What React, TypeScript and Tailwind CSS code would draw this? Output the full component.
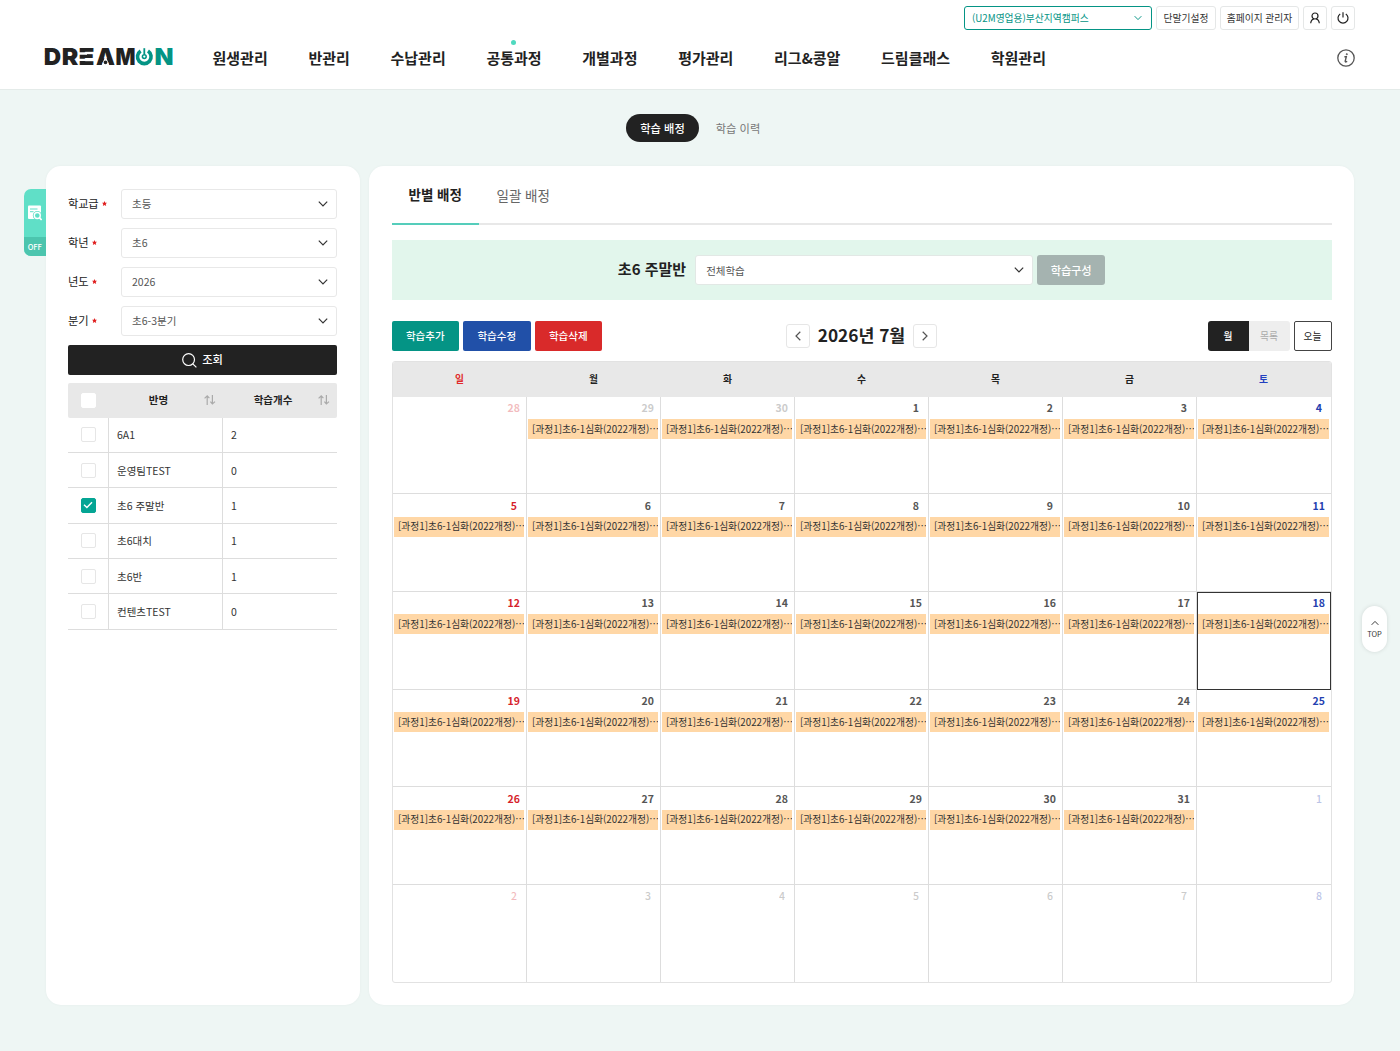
import { useState } from 'react';
import clsx from 'clsx';

const menus = ['원생관리', '반관리', '수납관리', '공통과정', '개별과정', '평가관리', '리그&콩알', '드림클래스', '학원관리'];

const filters = [
    { label: '학교급', value: '초등' },
    { label: '학년', value: '초6' },
    { label: '년도', value: '2026' },
    { label: '분기', value: '초6-3분기' },
];

const classes = [
    { name: '6A1', count: 2 },
    { name: '운영팀TEST', count: 0 },
    { name: '초6 주말반', count: 1 },
    { name: '초6대치', count: 1 },
    { name: '초6반', count: 1 },
    { name: '컨텐츠TEST', count: 0 },
];

const weekdays = ['일', '월', '화', '수', '목', '금', '토'];
const EVENT_TITLE = '[과정1]초6-1심화(2022개정)…';

// 6 weeks starting from Sunday, June 28
const days = Array.from({ length: 42 }, (_, i) => {
    const date = new Date(2026, 5, 28 + i);
    return {
        day: date.getDate(),
        week: i % 7,
        outside: date.getMonth() !== 6,
        hasEvent: i >= 1 && i <= 33,
        today: date.getMonth() === 6 && date.getDate() === 18,
    };
});

function Chevron({ className }: { className?: string }) {
    return (
        <svg viewBox="0 0 10 6" className={clsx('h-[6px] shrink-0', className)} fill="none" stroke="currentColor" strokeWidth="1.2">
            <path d="M0.8 0.7 5 5 9.2 0.7" />
        </svg>
    );
}

function Logo() {
    return (
        <svg viewBox="0 0 128 18" className="w-[128px] h-[18px] overflow-visible relative -top-px font-black font-['Inter','Noto_Sans_CJK_KR',sans-serif]">
            <g fill="#222" fontSize="23.6">
                <text x="-1.3" y="17.2" textLength="17.4" lengthAdjust="spacingAndGlyphs">D</text>
                <text x="16.7" y="17.2" textLength="16.6" lengthAdjust="spacingAndGlyphs">R</text>
                <text x="33.6" y="17.2" textLength="16" lengthAdjust="spacingAndGlyphs">E</text>
                <text x="51" y="17.2" textLength="19" lengthAdjust="spacingAndGlyphs">A</text>
                <text x="70.6" y="17.2" textLength="20" lengthAdjust="spacingAndGlyphs">M</text>
            </g>
            {/* cuts the stem of the E and opens the A */}
            <path d="M34 4.3H42V6.7H34ZM34 10.7H42V13.1H34ZM60.5 7.5 64.3 17.4H56.7Z" fill="#fff" />
            <circle cx="60.5" cy="14.4" r="1.8" fill="#222" />
            <text x="109.4" y="17.2" fontSize="23.6" fill="#049485" textLength="19" lengthAdjust="spacingAndGlyphs">N</text>
            <g fill="none" stroke="#049485">
                <path d="M95.6 3.1A6.8 6.8 0 1 0 103 3.1" strokeWidth="3.6" />
                <path d="M99.3 0.2V6.4" strokeWidth="1.8" />
                <circle cx="99.3" cy="8.6" r="1.9" strokeWidth="1.5" />
            </g>
        </svg>
    );
}

function Header() {
    return (
        <header className="h-[90px] bg-white border-b border-[#e4ebe9] px-[45px] pt-[6px]">
            <div className="flex justify-end gap-1 h-6 text-[9.75px] text-[#333]">
                <button className="flex items-center justify-between w-[188px] pl-[7px] pr-[9px] rounded-[3px] border border-[#049485] text-[#049485]">
                    (U2M영업용)부산지역캠퍼스
                    <Chevron className="w-[8px]" />
                </button>
                <button className="w-[60px] border border-[#e5e7e7] rounded-[3px]">단말기설정</button>
                <button className="w-[79px] border border-[#e5e7e7] rounded-[3px] whitespace-nowrap">홈페이지 관리자</button>
                <button className="w-6 flex items-center justify-center border border-[#e5e7e7] rounded-[3px]">
                    <svg viewBox="0 0 12 12" className="w-3 h-3" fill="none" stroke="#222" strokeWidth="1.2">
                        <circle cx="6" cy="4" r="3" />
                        <path d="M1.7 11.3C1.9 8.5 3.2 7.2 5 6.8M7 6.8C8.8 7.2 10.1 8.5 10.3 11.3" />
                    </svg>
                </button>
                <button className="w-6 flex items-center justify-center border border-[#e5e7e7] rounded-[3px]">
                    <svg viewBox="0 0 12 12" className="w-3 h-3" fill="none" stroke="#222" strokeWidth="1.2">
                        <path d="M3.2 1.9A5 5 0 1 0 8.8 1.9M6 0.3V5.4" />
                    </svg>
                </button>
            </div>
            <div className="flex items-center h-14">
                <Logo />
                <nav className="flex gap-[40.7px] ml-[39.5px] text-[15px] font-bold text-[#222]">
                    {menus.map((menu) => (
                        <a key={menu} className="relative whitespace-nowrap">
                            {menu}
                            {menu === '공통과정' && (
                                <span className="absolute -top-[7px] left-1/2 -ml-[3px] w-[5px] h-[5px] rounded-full bg-[#4fd9bf]" />
                            )}
                        </a>
                    ))}
                </nav>
                <svg viewBox="0 0 18 18" className="w-[18px] h-[18px] ml-auto" fill="none" stroke="#555" strokeWidth="1.3">
                    <circle cx="9" cy="9" r="8.2" />
                    <path d="M7.4 7.7H9.3L8.2 12.2Q8.1 13.1 9 12.9L10.2 12.3" strokeWidth="1.4" />
                    <circle cx="9.8" cy="5.2" r="0.6" fill="#555" strokeWidth="0.8" />
                </svg>
            </div>
        </header>
    );
}

function Checkbox({ checked, plain }: { checked?: boolean; plain?: boolean }) {
    return (
        <span
            className={clsx(
                'w-[15px] h-[15px] rounded-[2px] border flex items-center justify-center',
                checked ? 'bg-[#04a594] border-[#04a594]' : 'bg-white',
                !checked && (plain ? 'border-white' : 'border-[#e6e6e6]')
            )}
        >
            {checked && (
                <svg viewBox="0 0 10 8" className="w-[10px] h-2 shrink-0" fill="none" stroke="#fff" strokeWidth="1.4">
                    <path d="M1 3.8 3.9 6.6 9 1.2" />
                </svg>
            )}
        </span>
    );
}

function SortIcon() {
    return (
        <svg viewBox="0 0 12 10" className="w-3 h-[10px]" fill="none" stroke="#aaa" strokeWidth="1.2">
            <path d="M3.2 10V1M0.6 3.4 3.2 0.9 5.4 3.2M8.4 0V9M6.4 6.6 8.4 9 11 6.6" />
        </svg>
    );
}

function FilterPanel() {
    const [selected] = useState('초6 주말반');

    return (
        <aside className="relative w-[314px] h-[839px] bg-white rounded-[15px] px-[22px] pt-[22.5px] shadow-[0_0_3px_rgba(0,0,0,0.04)]">
            {/* Filter toggle */}
            <div className="absolute -left-[22px] top-[22.5px] w-[21.5px] h-[67.5px] rounded-l-[7px] overflow-hidden bg-[#60dfc7] flex flex-col">
                <div className="h-12 flex items-center justify-center">
                    <svg viewBox="0 0 14 16" className="w-[14px] h-4">
                        <path d="M1 0.5H12Q13 0.5 13 1.5V14H1Q0 14 0 13V1.5Q0 0.5 1 0.5Z" fill="#fff" />
                        <path d="M2 4H9.5M2 6.7H5.5" stroke="#60dfc7" strokeWidth="1" />
                        <circle cx="9.3" cy="10.5" r="3" fill="#60dfc7" stroke="#60dfc7" strokeWidth="3" />
                        <circle cx="9.3" cy="10.5" r="3" fill="none" stroke="#fff" strokeWidth="1.4" />
                        <path d="M11.4 12.6 13.6 15" stroke="#fff" strokeWidth="1.6" />
                    </svg>
                </div>
                <div className="flex-1 bg-[#4cc5ae] text-white text-[7.5px] font-medium flex items-center justify-center">OFF</div>
            </div>

            <div className="flex flex-col gap-[9px]">
                {filters.map((f) => (
                    <div key={f.label} className="flex items-center h-[30px]">
                        <label className="w-[53px] flex items-center gap-[4px] text-[11.25px] text-[#222] tracking-[-0.2px]">
                            {f.label}
                            <svg viewBox="0 0 6 6" className="w-[5px] h-[5px]" fill="#e02020">
                                <path d="M3 0 3.9 2 6 2.2 4.5 3.7 5 6 3 4.8 1 6 1.5 3.7 0 2.2 2.1 2Z" />
                            </svg>
                        </label>
                        <button className="w-[216px] h-full flex items-center justify-between border border-[#e8e8e8] rounded-[3px] pl-[10px] pr-[8.5px] text-[10.5px] text-[#555]">
                            <span className="pt-px">{f.value}</span>
                            <Chevron className="w-[10px] text-[#333]" />
                        </button>
                    </div>
                ))}
            </div>

            <button className="mt-[9.5px] w-[269px] h-[30px] bg-[#222] rounded-[2px] text-white text-[11.25px] font-medium flex items-center justify-center gap-[5px]">
                <svg viewBox="0 0 15 15" className="w-[15px] h-[15px]" fill="none" stroke="#fff" strokeWidth="1.2">
                    <circle cx="6.6" cy="6.6" r="5.9" />
                    <path d="M10.8 10.8 14.4 14.4" />
                </svg>
                <span className="-mt-px">조회</span>
            </button>

            <div className="mt-[7.5px] w-[269px] text-[10.5px] text-[#333]">
                <div className="flex h-[35px] bg-[#e8e8e8] rounded-[2px] font-bold text-[#222]">
                    <div className="w-[41px] flex items-center justify-center"><Checkbox plain /></div>
                    <div className="w-[114px] flex items-center pr-[7px]">
                        <span className="flex-1 text-center pl-[4px]">반명</span>
                        <SortIcon />
                    </div>
                    <div className="flex-1 flex items-center pr-[7px]">
                        <span className="flex-1 text-center pl-[5px]">학습개수</span>
                        <SortIcon />
                    </div>
                </div>
                {classes.map((c) => (
                    <div key={c.name} className="flex h-[35.35px] border-b border-[#ddd]">
                        <div className="w-[41px] flex items-center justify-center border-r border-[#ddd]">
                            <Checkbox checked={c.name === selected} />
                        </div>
                        <div className="w-[114px] flex items-center pl-2 pt-px border-r border-[#ddd]">{c.name}</div>
                        <div className="flex-1 flex items-center pl-2 pt-px">{c.count}</div>
                    </div>
                ))}
            </div>
        </aside>
    );
}

function Calendar() {
    return (
        <div className="mt-[10px] h-[622px] flex flex-col border border-[#e2e2e2] rounded-[3px] overflow-hidden">
            <div className="grid grid-cols-7 h-[34.5px] shrink-0 bg-[#e8e8e8] text-[9.75px] font-bold text-[#222]">
                {weekdays.map((d, i) => (
                    <div
                        key={d}
                        className={clsx('flex items-center justify-center', i === 0 && 'text-[#e02b2b]', i === 6 && 'text-[#2340c0]')}
                    >
                        {d}
                    </div>
                ))}
            </div>
            <div className="grid grid-cols-7 grid-rows-[repeat(5,97.7px)_1fr] flex-1">
                {days.map((d, i) => (
                    <div
                        key={i}
                        className={clsx(
                            'min-w-0 border-[#ddd] px-[1.5px]',
                            d.week < 6 && 'border-r',
                            i < 35 && 'border-b',
                            d.today && 'outline outline-1 -outline-offset-1 outline-[#333]'
                        )}
                    >
                        <div
                            className={clsx(
                                'h-[22.5px] flex items-center justify-end text-[10.5px]',
                                i < 34 ? 'font-bold' : 'font-medium',
                                d.day < 10 ? 'pr-[7px]' : 'pr-[4px]',
                                d.outside && 'opacity-30',
                                d.week === 0 && 'text-[#d61f2c]',
                                d.week === 6 && 'text-[#2340b0]',
                                d.week > 0 && d.week < 6 && 'text-[#555]'
                            )}
                        >
                            {d.day}
                        </div>
                        {d.hasEvent && (
                            <div className="h-[20px] flex items-center pl-[4px] bg-[#ffd7a6] text-[9.75px] text-[#333] whitespace-nowrap overflow-hidden">
                                {EVENT_TITLE}
                            </div>
                        )}
                    </div>
                ))}
            </div>
        </div>
    );
}

function AssignPanel() {
    return (
        <main className="w-[985px] h-[839px] bg-white rounded-[15px] px-[22.5px] shadow-[0_0_3px_rgba(0,0,0,0.04)]">
            <div className="flex h-[59px] border-b-2 border-[#e8e8e8] text-[13.5px] text-[#666]">
                <button className="h-[59px] px-[17px] border-b-2 border-[#55cdbb] font-bold text-[#222]">반별 배정</button>
                <button className="px-[17.5px] h-[58px]">일괄 배정</button>
            </div>

            <div className="mt-[15px] h-[60px] bg-[#e2f6ec] flex items-center justify-center">
                <h2 className="text-[15px] font-bold text-[#222] mr-[9px] -mt-[2px]">초6 주말반</h2>
                <button className="w-[338px] h-[30px] flex items-center justify-between bg-white border border-[#e2e8e5] rounded-[3px] pl-[10px] pr-[8px] text-[10.5px] text-[#555]">
                    <span className="pt-px">전체학습</span>
                    <Chevron className="w-[10px] text-[#333]" />
                </button>
                <button className="ml-1 w-[68px] h-[30px] rounded-[3px] bg-[#a5b3b0] text-white text-[11.25px] tracking-[-0.2px] font-medium">학습구성</button>
            </div>

            <div className="mt-[21px] h-[30px] grid grid-cols-3 items-center">
                <div className="flex gap-1 text-[10.5px] font-medium text-white">
                    <button className="w-[67.5px] h-[30px] rounded-[2px] bg-[#049485]">학습추가</button>
                    <button className="w-[67.5px] h-[30px] rounded-[2px] bg-[#2150a8]">학습수정</button>
                    <button className="w-[67.5px] h-[30px] rounded-[2px] bg-[#d92a2a]">학습삭제</button>
                </div>
                <div className="flex items-center justify-center">
                    <button className="w-6 h-6 flex items-center justify-center border border-[#e6e6e6] rounded-[3px]">
                        <Chevron className="w-[10px] rotate-90 text-[#555]" />
                    </button>
                    <span className="mx-[7.5px] -mt-[2px] text-[17.25px] font-bold text-[#222] whitespace-nowrap">2026년 7월</span>
                    <button className="w-6 h-6 flex items-center justify-center border border-[#e6e6e6] rounded-[3px]">
                        <Chevron className="w-[10px] -rotate-90 text-[#555]" />
                    </button>
                </div>
                <div className="flex justify-end text-[9.75px]">
                    <button className="w-[41px] h-[30px] rounded-l-[3px] bg-[#222] text-white font-medium">월</button>
                    <button className="w-[41px] h-[30px] rounded-r-[3px] bg-[#eee] text-[#aaa]">목록</button>
                    <button className="ml-1 w-[38px] h-[30px] rounded-[2px] border border-[#444] text-[#222]">오늘</button>
                </div>
            </div>

            <Calendar />
        </main>
    );
}

export default function App() {
    return (
        <div lang="ko" className="relative w-[1400px] h-[1051px] overflow-hidden bg-[#eef6f4] font-['Noto_Sans_CJK_KR',sans-serif]">
            <Header />
            <div className="flex justify-center items-center h-[28px] mt-6 text-[11.25px] pl-[3px]">
                <button className="w-[73px] h-[28px] rounded-full bg-[#222] text-white font-medium">학습 배정</button>
                <button className="w-[78px] h-[28px] text-[#777]">학습 이력</button>
            </div>
            <div className="flex gap-[9px] pl-[46px] mt-6">
                <FilterPanel />
                <AssignPanel />
            </div>

            {/* Scroll to top */}
            <button className="absolute left-[1362px] top-[606px] w-[25px] h-[46px] rounded-full bg-white shadow-[0_0_4px_rgba(0,0,0,0.12)] flex flex-col items-center justify-center text-[7.5px] leading-[10px] text-[#333]">
                <Chevron className="rotate-180 w-[8px] mb-[3px]" />
                TOP
            </button>
        </div>
    );
}
